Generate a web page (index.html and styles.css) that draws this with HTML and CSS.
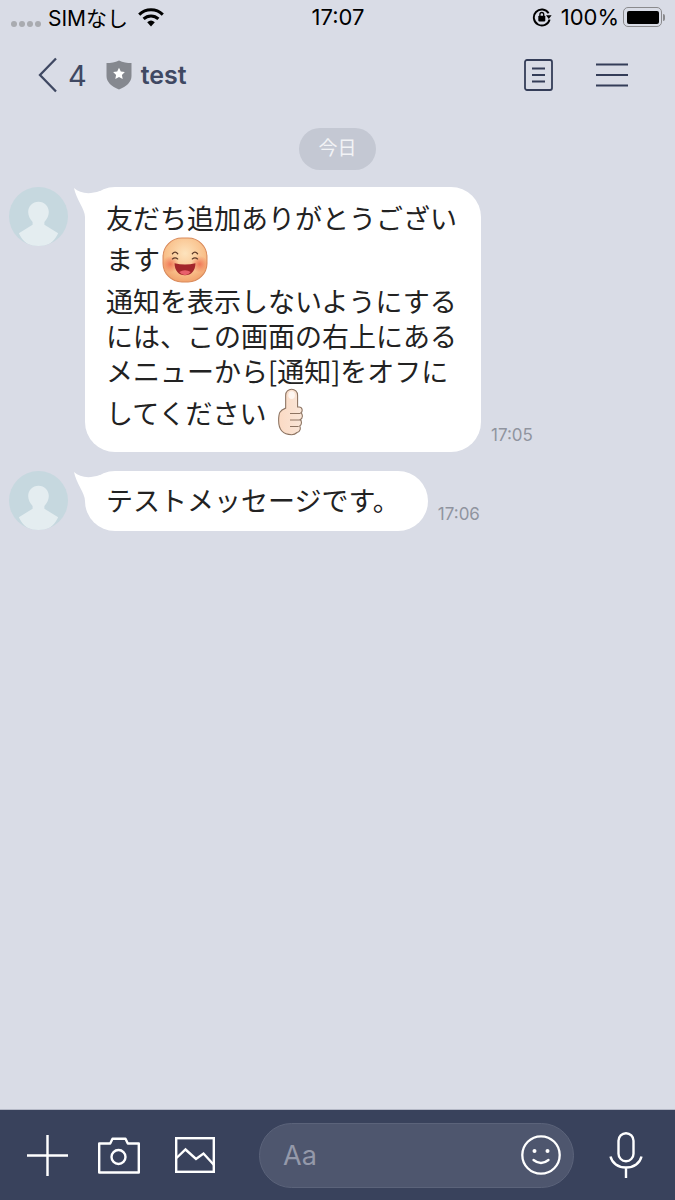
FILE: index.html
```html
<!DOCTYPE html>
<html lang="ja">
<head>
<meta charset="utf-8">
<title>test</title>
<link rel="stylesheet" href="styles.css">
</head>
<body>
<div class="phone">
  <div class="status">
    <div class="status-left">
      <div class="signal"><i></i><i></i><i></i><i></i></div>
      <span class="carrier">SIMなし</span>
      <svg class="wifi" viewBox="0 0 26 19"><path d="M1.200 6.600A17 17 0 0 1 24.800 6.600" fill="none" stroke="#000" stroke-width="3"/><path d="M5.600 10.900A10.800 10.800 0 0 1 20.400 10.900" fill="none" stroke="#000" stroke-width="3"/><path d="M9.200 14.200a5.800 5.800 0 0 1 7.600 0L13 18.600z" fill="#000"/></svg>
    </div>
    <div class="clock">17:07</div>
    <div class="status-right">
      <svg class="rotlock" viewBox="0 0 20 20"><path d="M16.600 6.200A8 8 0 1 0 17.600 12.400" fill="none" stroke="#000" stroke-width="1.900"/><path d="M14 8.200h5.600L16.800 12z" fill="#000"/><rect x="6.300" y="8.800" width="7" height="5.600" rx=".8" fill="#000"/><path d="M7.900 9V7.400a1.900 1.900 0 0 1 3.800 0V9" fill="none" stroke="#000" stroke-width="1.300"/></svg>
      <span class="pct">100%</span>
      <div class="battery"><div class="battery-fill"></div></div>
      <div class="battery-cap"></div>
    </div>
  </div>

  <header class="nav">
    <svg class="back" viewBox="0 0 20 36"><path d="M18 1.500 2 18l16 16.500" fill="none" stroke="#3f4862" stroke-width="2.300"/></svg>
    <span class="unread">4</span>
    <svg class="shield" viewBox="0 0 26 30"><path d="M13 .5C17 2.500 21 3 25.500 3v13c0 6-5 10.500-12.500 13.500C5.500 26.500.5 22 .5 16V3C5 3 9 2.500 13 .5z" fill="#85888f"/><path d="m13 7.800 1.800 3.800 4.100.5-3 2.900.8 4.100-3.700-2-3.700 2 .8-4.100-3-2.900 4.100-.5z" fill="#fff"/></svg>
    <span class="title">test</span>
    <div class="nav-actions">
      <svg class="note" viewBox="0 0 29 32"><rect x="1" y="1" width="27" height="30" rx="2" fill="none" stroke="#343d58" stroke-width="1.800"/><path d="M8 9.500h13M8 16h13M8 22.500h13" stroke="#343d58" stroke-width="1.800"/></svg>
      <svg class="menu" viewBox="0 0 32 24"><path d="M0 1.500h32M0 12h32M0 22.500h32" stroke="#343d58" stroke-width="2"/></svg>
    </div>
  </header>

  <main class="chat">
    <div class="date-row"><span class="date">今日</span></div>

    <div class="msg msg-long">
      <svg class="avatar" viewBox="0 0 60 60"><defs><clipPath id="round-a"><circle cx="30" cy="30" r="30"/></clipPath></defs><circle cx="30" cy="30" r="30" fill="#c6d8df"/><g clip-path="url(#round-a)" fill="#e4edf0"><path d="M30 15c6 0 10.500 4.500 10.500 10.500 0 4-2 7.500-4.500 10v3l14 8.500c-4 9-12 14-20 14S14 56 10 47l14-8.500v-3c-2.500-2.500-4.500-6-4.500-10C19.500 19.500 24 15 30 15z"/></g></svg>
      <div class="bubble">
        <svg class="tail" viewBox="0 0 30 30"><path d="M0 1C6 6 14 8 26 4V30H11C11 22 2 12 0 1z" fill="#fff"/></svg>
        <div class="text">友だち追加ありがとうござい<br>ます<svg class="face" viewBox="0 0 44 44"><defs><radialGradient id="skin" cx=".5" cy=".35" r=".75"><stop offset="0" stop-color="#fde3bd"/><stop offset=".6" stop-color="#f9c08a"/><stop offset="1" stop-color="#ee9560"/></radialGradient><radialGradient id="cheek"><stop offset="0" stop-color="#ee6b4f" stop-opacity=".85"/><stop offset="1" stop-color="#ee6b4f" stop-opacity="0"/></radialGradient></defs><rect x="1" y="1" width="42" height="42" rx="18" fill="url(#skin)" stroke="#d98a5b"/><circle cx="8" cy="26" r="8" fill="url(#cheek)"/><circle cx="36" cy="26" r="8" fill="url(#cheek)"/><path d="M10 16q2.500-3 5 0M29 16q2.500-3 5 0M10 21q2.500-2 5 0M29 21q2.500-2 5 0" fill="none" stroke="#5d3a2a" stroke-width="1.200" stroke-linecap="round"/><path d="M12 25q10 2.500 20 0c0 7-4 11.500-10 11.500S12 32 12 25z" fill="#a3262b"/><path d="M16.500 33.500q5.500-3.500 11 0-2.500 3-5.500 3t-5.500-3z" fill="#e8606b"/></svg><br>通知を表示しないようにする<br>には、この画面の右上にある<br>メニューから[通知]をオフに<br>してください <svg class="thumb" viewBox="0 0 24 45"><defs><linearGradient id="hand" x1="0" x2="1"><stop offset="0" stop-color="#fbdac4"/><stop offset="1" stop-color="#f9e6d8"/></linearGradient></defs><path d="M8 18V6a5.500 5.500 0 0 1 11 0v11h1.500c3 0 3.500 4 1.500 5.500 2 1 2 5-.5 6 1.500 1.500 1.500 5-.5 6 1 2 .5 5.500-2.500 6-1.500 1.500-3 2-5 2-7 0-12-3.500-12-13 0-7 1-9.500 6.500-11.500z" fill="url(#hand)" stroke="#8d7462" stroke-width="1"/><path d="M12 23h9.500M12 29h9.500M12 35h8" stroke="#8d7462" stroke-width="1" fill="none"/><ellipse cx="13.500" cy="6" rx="3" ry="3.500" fill="#fff" opacity=".7"/></svg></div>
      </div>
      <time class="sent">17:05</time>
    </div>

    <div class="msg">
      <svg class="avatar" viewBox="0 0 60 60"><defs><clipPath id="round-b"><circle cx="30" cy="30" r="30"/></clipPath></defs><circle cx="30" cy="30" r="30" fill="#c6d8df"/><g clip-path="url(#round-b)" fill="#e4edf0"><path d="M30 15c6 0 10.500 4.500 10.500 10.500 0 4-2 7.500-4.500 10v3l14 8.500c-4 9-12 14-20 14S14 56 10 47l14-8.500v-3c-2.500-2.500-4.500-6-4.500-10C19.500 19.500 24 15 30 15z"/></g></svg>
      <div class="bubble bubble-short">
        <svg class="tail" viewBox="0 0 30 30"><path d="M0 1C6 6 14 8 26 4V30H11C11 22 2 12 0 1z" fill="#fff"/></svg>
        <div class="text">テストメッセージです。</div>
      </div>
      <time class="sent">17:06</time>
    </div>
  </main>

  <footer class="composer">
    <svg class="plus" viewBox="0 0 42 42"><path d="M21 0v42M0 21h42" stroke="#fff" stroke-width="2.500"/></svg>
    <svg class="camera" viewBox="0 0 42 37"><path d="M1.200 6.500h11l2.300-4.800h13l2.300 4.800h11v29H1.200z" fill="none" stroke="#fff" stroke-width="2.400" stroke-linejoin="round"/><circle cx="20.500" cy="20" r="7" fill="none" stroke="#fff" stroke-width="2.400"/></svg>
    <svg class="picture" viewBox="0 0 40 36"><rect x="1.200" y="1.200" width="37.600" height="33.600" fill="none" stroke="#fff" stroke-width="2.400"/><path d="M1.500 21 10.500 12.500 21 22l7.500-5.500L39 28" fill="none" stroke="#fff" stroke-width="2.400"/></svg>
    <div class="field">
      <span class="placeholder">Aa</span>
      <svg class="smile" viewBox="0 0 40 40"><circle cx="20" cy="20" r="18.700" fill="none" stroke="#fff" stroke-width="2.300"/><circle cx="13.500" cy="16" r="2" fill="#fff"/><circle cx="26.500" cy="16" r="2" fill="#fff"/><path d="M12.500 25q7.500 6 15 0" fill="none" stroke="#fff" stroke-width="2.300" stroke-linecap="round"/></svg>
    </div>
    <svg class="mic" viewBox="0 0 34 46"><rect x="9.500" y="1.200" width="15" height="28" rx="7.500" fill="none" stroke="#fff" stroke-width="2.400"/><path d="M1.500 24.500C3 31 9 35.500 17 35.500s14-4.500 15.500-11M17 35.500V46" fill="none" stroke="#fff" stroke-width="2.400"/></svg>
  </footer>
</div>
</body>
</html>
```
FILE: styles.css
```css
* { box-sizing: border-box; }

html, body {
  margin: 0;
  padding: 0;
}

body {
  font-family: Inter, "Noto Sans CJK JP", sans-serif;
  background: #d9dce6;
}

.phone {
  width: 675px;
  height: 1200px;
  display: flex;
  flex-direction: column;
  overflow: hidden;
  background: #d9dce6;
}

/* System status bar */
.status {
  height: 34px;
  flex: none;
  display: grid;
  grid-template-columns: 1fr auto 1fr;
  align-items: center;
  padding: 0 10px 0 11px;
  color: #000;
  font-size: 22px;
}

.status-left,
.status-right {
  display: flex;
  align-items: center;
}

.status-right { justify-content: flex-end; }

.signal {
  display: flex;
  gap: 2px;
  margin: 14px 7px 0 0;
}

.signal i {
  width: 6px;
  height: 6px;
  border-radius: 50%;
  background: #a9abb0;
}

.carrier { font-size: 21px; }

.wifi {
  width: 26px;
  height: 19px;
  margin-left: 10px;
}

.clock { font-size: 22px; }

.rotlock {
  width: 20px;
  height: 20px;
  margin-right: 9px;
}

.pct { margin-right: 4px; }

.battery {
  width: 39px;
  height: 20px;
  padding: 2.500px;
  border: 1.500px solid #8a8a8d;
  border-radius: 5px;
}

.battery-fill {
  height: 100%;
  background: #000;
  border-radius: 2px;
}

.battery-cap {
  width: 2px;
  height: 7px;
  margin-left: 1px;
  background: #8a8a8d;
  border-radius: 0 2px 2px 0;
}

/* Conversation header */
.nav {
  height: 82px;
  flex: none;
  display: flex;
  align-items: center;
  padding: 0 47px 0 38px;
  color: #3f4862;
}

.back {
  width: 20px;
  height: 36px;
}

.unread {
  margin-left: 10px;
  font-size: 29px;
  font-weight: 400;
}

.shield {
  width: 26px;
  height: 30px;
  margin-left: 19px;
}

.title {
  margin-left: 9px;
  font-size: 25px;
  font-weight: 600;
}

.nav-actions {
  margin-left: auto;
  display: flex;
  align-items: center;
  gap: 43px;
}

.note {
  width: 29px;
  height: 32px;
}

.menu {
  width: 32px;
  height: 24px;
}

/* Messages */
.chat {
  flex: 1;
  min-height: 0;
  padding-top: 12px;
}

.date-row {
  display: flex;
  justify-content: center;
  margin-bottom: 17px;
}

.date {
  width: 77px;
  height: 42px;
  border-radius: 21px;
  background: #c4c8d3;
  color: #f2f3f6;
  font-size: 19px;
  line-height: 42px;
  text-align: center;
}

.msg {
  display: flex;
  align-items: flex-end;
  padding-left: 9px;
  position: relative;
}

.msg-long { margin-bottom: 19px; }

.avatar {
  position: absolute;
  left: 9px;
  top: 0;
  width: 59px;
  height: 59px;
}

.bubble {
  position: relative;
  margin-left: 76px;
  background: #fff;
  border-radius: 30px;
  padding: 13px 24px 14px 21px;
}

.bubble-short {
  padding-top: 11px;
  padding-right: 28px;
}

.tail {
  position: absolute;
  left: -11px;
  top: 0;
  width: 30px;
  height: 30px;
}

.text {
  position: relative;
  color: #222;
  font-family: "Noto Sans CJK JP", sans-serif;
  font-size: 27px;
  font-weight: 400;
  line-height: 35px;
  white-space: nowrap;
}

.face {
  width: 46px;
  height: 46px;
  margin: 2px 0 0 2px;
  vertical-align: -13px;
}

.thumb {
  width: 26px;
  height: 50px;
  margin-left: 5px;
  vertical-align: -14px;
}

.sent {
  margin: 0 0 7px 10px;
  color: #90949f;
  font-size: 17px;
}

/* Message composer */
.composer {
  height: 91px;
  flex: none;
  display: flex;
  align-items: center;
  padding: 0 32px 0 27px;
  background: #39425c;
  border-top: 1px solid #b4b8c6;
}

.plus {
  width: 41px;
  height: 41px;
}

.camera {
  width: 42px;
  height: 37px;
  margin-left: 30px;
}

.picture {
  width: 40px;
  height: 36px;
  margin-left: 35px;
}

.field {
  width: 315px;
  height: 65px;
  margin-left: 44px;
  display: flex;
  align-items: center;
  justify-content: space-between;
  padding: 0 12px 0 23px;
  background: #4e566e;
  border: 1px solid #5b637a;
  border-radius: 33px;
}

.placeholder {
  color: #9499aa;
  font-size: 27px;
  font-weight: 400;
}

.smile {
  width: 40px;
  height: 40px;
}

.mic {
  width: 34px;
  height: 46px;
  margin-left: auto;
}
```
